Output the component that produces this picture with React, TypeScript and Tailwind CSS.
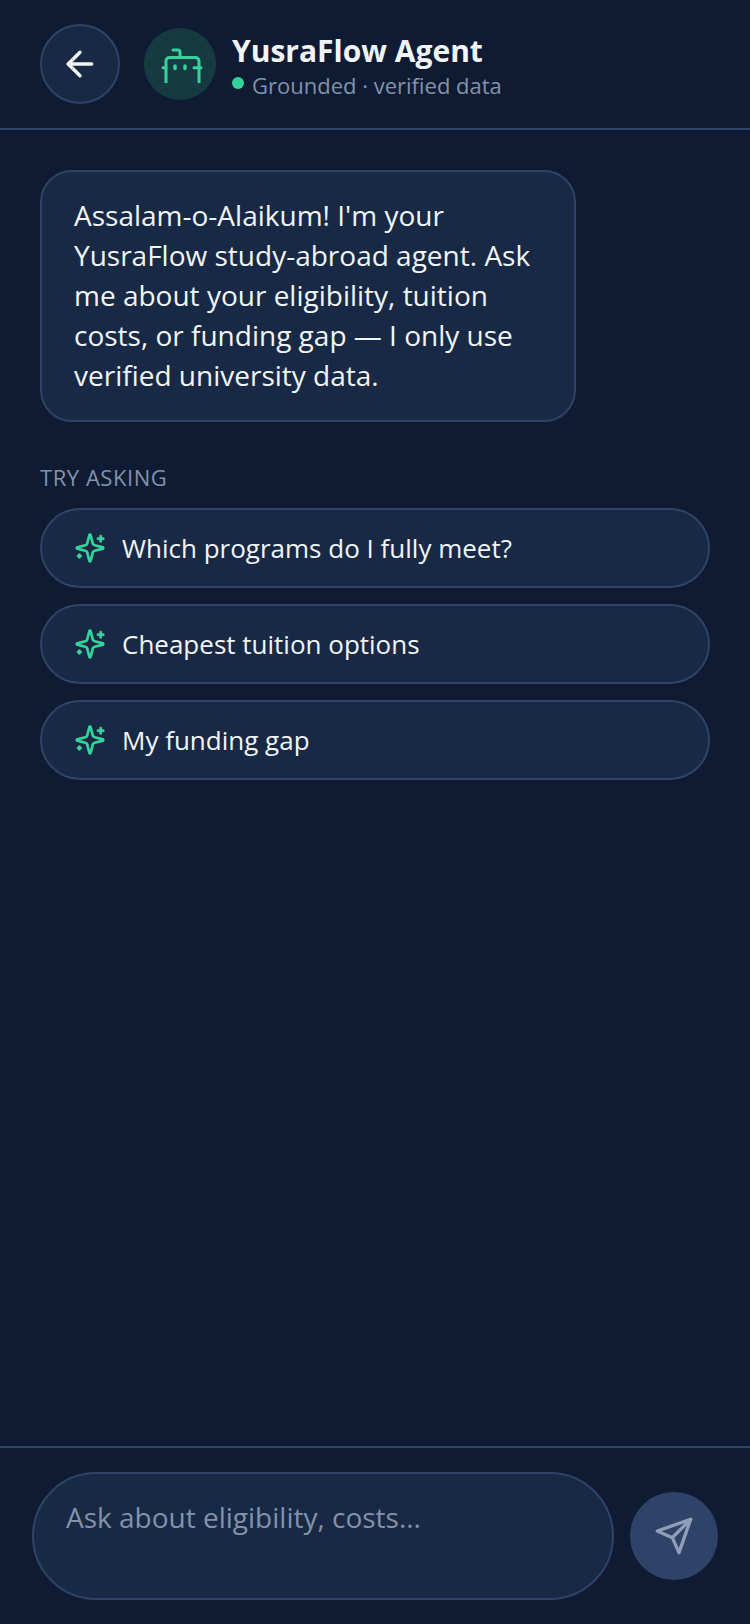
import { ArrowLeft } from "lucide-react";

const suggestions = [
  "Which programs do I fully meet?",
  "Cheapest tuition options",
  "My funding gap",
];

function BotIcon() {
  return (
    <svg
      viewBox="0 0 48 48"
      fill="none"
      stroke="currentColor"
      strokeWidth="3"
      strokeLinecap="round"
      strokeLinejoin="round"
      className="h-12 w-12 text-[#34d399]"
    >
      <path d="M17 10h5a2 2 0 0 1 2 2v5.5" />
      <path d="M10 43V21a3.5 3.5 0 0 1 3.5-3.5h26a3.5 3.5 0 0 1 3.5 3.5v22" strokeLinecap="butt" />
      <path d="M7 27.7h3" />
      <path d="M38 27.7h7" />
      <path d="M19 26v2.5" strokeWidth="3.5" />
      <path d="M29 26v2.5" strokeWidth="3.5" />
    </svg>
  );
}

function SparkIcon() {
  return (
    <svg
      viewBox="0 0 24 24"
      fill="none"
      stroke="currentColor"
      strokeWidth="2"
      strokeLinecap="round"
      strokeLinejoin="round"
      className="h-8 w-8 text-[#34d399]"
    >
      <path d="M9.937 15.5A2 2 0 0 0 8.5 14.063l-6.135-1.582a.5.5 0 0 1 0-.962L8.5 9.936A2 2 0 0 0 9.937 8.5l1.582-6.135a.5.5 0 0 1 .963 0L14.063 8.5A2 2 0 0 0 15.5 9.937l6.135 1.581a.5.5 0 0 1 0 .964L15.5 14.063a2 2 0 0 0-1.437 1.437l-1.582 6.135a.5.5 0 0 1-.963 0z" />
      <path d="M20 3v4" />
      <path d="M22 5h-4" />
      <path d="M4 17v2" />
      <path d="M5 18H3" />
    </svg>
  );
}

function SendIcon() {
  return (
    <svg
      viewBox="0 0 24 24"
      fill="none"
      stroke="currentColor"
      strokeWidth="2"
      strokeLinecap="round"
      strokeLinejoin="round"
      className="h-10 w-10"
    >
      <path d="m22 2-7 20-4-9-9-4Z" />
      <path d="M22 2 11 13" />
    </svg>
  );
}

export default function App() {
  return (
    <div className="flex h-[1624px] w-[750px] flex-col overflow-hidden bg-[#0f1b33] font-['Open_Sans',sans-serif] text-[#f1f5f9]">
      {/* Header */}
      <header className="flex h-[130px] shrink-0 items-start gap-6 border-b-2 border-[#2f4368] pl-10 pt-6">
        <button className="flex h-20 w-20 items-center justify-center rounded-full border-2 border-[#2f4368] bg-[#182945]">
          <ArrowLeft size={40} strokeWidth={2.1} />
        </button>
        <div className="mt-1 flex items-center gap-4">
          <div className="flex h-[72px] w-[72px] items-center justify-center rounded-full bg-[#153a42]">
            <BotIcon />
          </div>
          <div className="pt-[2px]">
            <h1 className="mt-[1px] text-[30px] font-bold leading-[40px]">YusraFlow Agent</h1>
            <div className="-mt-[1px] flex items-center gap-2 text-[22px] leading-[30px] text-[#8292ab]">
              <span className="mb-1 h-3 w-3 rounded-full bg-[#34d399]" />
              Grounded · verified data
            </div>
          </div>
        </div>
      </header>

      {/* Messages */}
      <main className="flex flex-1 flex-col px-10 pt-10">
        <div className="w-[536px] rounded-[32px] border-2 border-[#2f4368] bg-[#182945] px-8 pb-[25px] pt-[23px] text-[28px] leading-[40px]">
          Assalam-o-Alaikum! I'm your YusraFlow study-abroad agent. Ask me about your eligibility, tuition costs, or funding gap — I only use verified university data.
        </div>
        <div className="mt-10 text-[22px] leading-[30px] tracking-[0.55px] text-[#8292ab]">TRY ASKING</div>
        <div className="mt-4 flex flex-col gap-4">
          {suggestions.map((s) => (
            <button
              key={s}
              className="flex h-20 items-center gap-4 rounded-full border-2 border-[#2f4368] bg-[#182945] px-8 text-[26px]"
            >
              <SparkIcon />
              {s}
            </button>
          ))}
        </div>
      </main>

      {/* Composer */}
      <footer className="flex h-[178px] shrink-0 items-center gap-4 border-t-2 border-[#2f4368] pl-8">
        <textarea
          rows={2}
          placeholder="Ask about eligibility, costs..."
          className="h-32 w-[582px] shrink-0 resize-none rounded-[64px] border-2 border-[#2f4368] bg-[#182945] px-8 pb-6 pt-[23px] text-[28px] leading-[40px] outline-none placeholder:text-[#8292ab]"
        />
        <button className="flex h-[88px] w-[88px] shrink-0 items-center justify-center rounded-full bg-[#2f4368] text-[#8f9fb8]">
          <SendIcon />
        </button>
      </footer>
    </div>
  );
}
